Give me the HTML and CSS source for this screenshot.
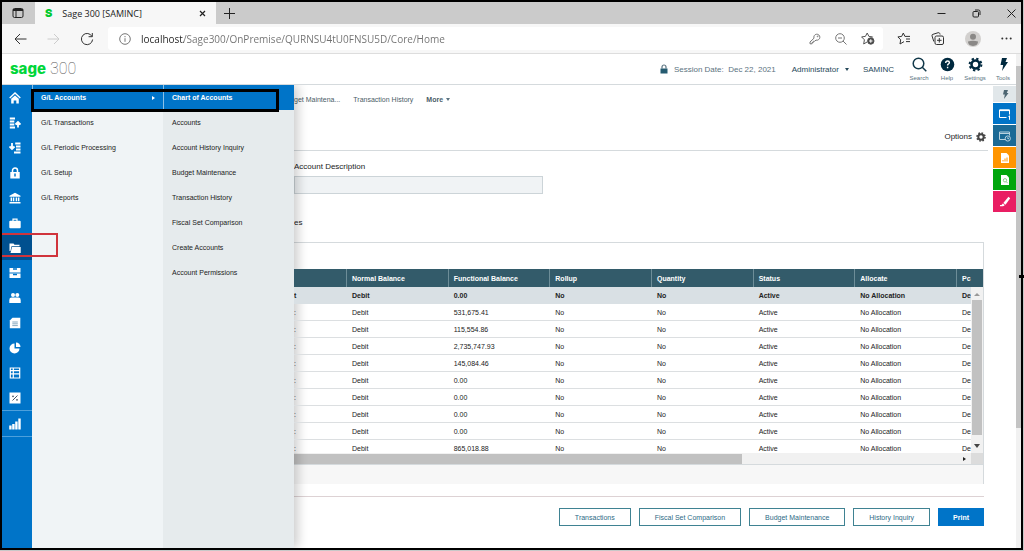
FILE: index.html
```html
<!DOCTYPE html>
<html lang="en">
  <head>
    <meta charset="UTF-8" />
    <meta name="viewport" content="width=device-width, initial-scale=1.0" />
    <title>Sage 300 [SAMINC]</title>
    <link rel="stylesheet" href="styles.css">
  </head>
  <body>
    <div class="window">
      <!-- Browser tabs -->
      <div class="tab-bar">
        <button class="tab-actions" aria-label="Tab actions">
          <svg width="12" height="12" viewBox="0 0 12 12" fill="none" stroke="#222"><rect x="1" y="1.5" width="10" height="9" rx="1.5" /><path d="M1 3h10" stroke-width="2" /><path d="M4 3v7" /></svg>
        </button>
        <div class="tab">
          <span class="favicon">S</span>
          <span class="tab-title">Sage 300 [SAMINC]</span>
          <button aria-label="Close tab"><svg width="7" height="7" viewBox="0 0 7 7" stroke="#222" stroke-width="1.2"><path d="M1 1l5 5M6 1l-5 5" /></svg></button>
        </div>
        <button class="new-tab" aria-label="New tab"><svg width="11" height="11" viewBox="0 0 11 11" stroke="#222"><path d="M5.5 0v11M0 5.5h11" /></svg></button>
        <div class="window-buttons">
          <button aria-label="Minimize"><svg width="9" height="9" viewBox="0 0 9 9" stroke="#222"><path d="M0.500 4.500h8" /></svg></button>
          <button aria-label="Restore"><svg width="9" height="9" viewBox="0 0 9 9" fill="none" stroke="#222"><rect x="1" y="2.500" width="5.500" height="5.500" rx="1" /><path d="M3 1h3.500a1.500 1.500 0 0 1 1.500 1.500v3.500" /></svg></button>
          <button aria-label="Close"><svg width="9" height="9" viewBox="0 0 9 9" stroke="#222"><path d="M0.500 0.500l8 8M8.500 0.500l-8 8" /></svg></button>
        </div>
      </div>

      <!-- Address bar -->
      <div class="toolbar">
        <button aria-label="Back"><svg width="13" height="12" viewBox="0 0 13 12" fill="none" stroke="#333"><path d="M12.500 6H1M6 1L1 6l5 5" /></svg></button>
        <button aria-label="Forward"><svg width="13" height="12" viewBox="0 0 13 12" fill="none" stroke="#ccc"><path d="M0.500 6H12M7 1l5 5-5 5" /></svg></button>
        <button aria-label="Refresh"><svg width="14" height="14" viewBox="0 0 14 14" fill="none" stroke="#333"><path d="M12 4.500A5.600 5.600 0 1 0 12.600 7.500M12.300 1v3.700H8.600" /></svg></button>
        <div class="address">
          <svg width="12" height="12" viewBox="0 0 12 12" fill="none" stroke="#777"><circle cx="6" cy="6" r="5.300" /><path d="M6 5.200v3.600M6 3v1.200" /></svg>
          <input type="text" aria-label="Address" value="localhost/Sage300/OnPremise/QURNSU4tU0FNSU5D/Core/Home" />
          <button aria-label="Passwords"><svg width="12" height="12" viewBox="0 0 12 12" fill="none" stroke="#777"><path d="M5 5.200a3 3 0 1 1 2 1.900L5.500 8.300H4.300v1.200H3.100v1.300H1V9z" /><circle cx="8.600" cy="3.400" r=".4" /></svg></button>
          <button aria-label="Zoom"><svg width="12" height="12" viewBox="0 0 12 12" fill="none" stroke="#777"><circle cx="5" cy="5" r="4.300" /><path d="M8 8l3.500 3.500M3 5h4" /></svg></button>
          <button aria-label="Add to favorites"><svg width="14" height="13" viewBox="0 0 14 13" fill="none" stroke="#555"><path d="M6 10L2.700 12l.7-4.200L.6 4.900l3.800-.5L6.200 1l1.700 3.400 3.700.5-.8.8" /><circle cx="9.800" cy="9" r="3.200" fill="#444" /><path d="M8 9h3.600M9.800 7.200v3.600" stroke="#fff" /></svg></button>
        </div>
        <div class="toolbar-end">
          <button aria-label="Favorites"><svg width="14" height="13" viewBox="0 0 14 13" fill="none" stroke="#333"><path d="M7 9.600L3 12l.7-4.200L.9 4.900l3.800-.5L6.300 1l1.600 3.400H13M9 7h4M9 9.600h4" /></svg></button>
          <button aria-label="Collections"><svg width="14" height="13" viewBox="0 0 14 13" fill="none" stroke="#333"><rect x="4" y="4" width="8.500" height="8.500" rx="1.500" /><path d="M8.300 6v4.600M6 8.300h4.600M2.800 9.500L1 3.800a1.300 1.300 0 0 1 1-1.500L7.200.7a1.300 1.300 0 0 1 1.600.9l.3.9" /></svg></button>
          <button aria-label="Profile"><svg width="16" height="16" viewBox="0 0 16 16"><circle cx="8" cy="8" r="8" fill="#d2d0ce" /><circle cx="8" cy="5.800" r="3" fill="#8a8886" /><path d="M3 10.500q5-1.500 10 0 0 4-5 4.500-5-.5-5-4.500z" fill="#8a8886" /></svg></button>
          <button aria-label="More options"><svg width="11" height="3" viewBox="0 0 11 3" fill="#333"><circle cx="1.300" cy="1.500" r="1" /><circle cx="5.500" cy="1.500" r="1" /><circle cx="9.700" cy="1.500" r="1" /></svg></button>
        </div>
      </div>

      <div class="viewport">
        <div class="app">
          <header class="app-header">
            <a class="logo" href="#"><b>sage</b> <span>300</span></a>
            <div class="session">
              <svg width="8" height="10" viewBox="0 0 8 10"><path d="M2 4.500V3a2 2 0 0 1 4 0v1.500" fill="none" stroke="#5b7380" stroke-width="1.200" /><rect x="0.500" y="4.500" width="7" height="5" fill="#255b70" /></svg>
              <span>Session Date:&nbsp; Dec 22, 2021</span>
            </div>
            <button class="user">Administrator <i class="caret"></i></button>
            <span class="company">SAMINC</span>
            <nav class="header-tools">
              <a href="#"><svg width="15" height="15" viewBox="0 0 15 15" fill="none" stroke="#12394a" stroke-width="1.500"><circle cx="6.500" cy="6.500" r="5.300" /><path d="M10.300 10.300l4 4" /></svg>Search</a>
              <a href="#"><svg width="15" height="15" viewBox="0 0 15 15"><circle cx="7.500" cy="7.500" r="6.800" fill="#00293f" /><path d="M5.700 6q0-2 1.900-2 1.800 0 1.800 1.600 0 1-1.100 1.500-.7.400-.7 1.400M7.600 9.800v1.500" fill="none" stroke="#fff" stroke-width="1.400" /></svg>Help</a>
              <a href="#"><svg width="15" height="15" viewBox="0 0 15 15" fill="none" stroke="#00293f"><circle cx="7.500" cy="7.500" r="4" stroke-width="2.600" /><circle cx="7.500" cy="7.500" r="5.900" stroke-width="2" stroke-dasharray="2.300 2.334" /></svg>Settings</a>
              <a href="#"><svg width="15" height="15" viewBox="0 0 15 15" fill="#00293f"><path d="M6 1h5L9.500 5H12L6 14l1.200-6H4.500z" /></svg>Tools</a>
            </nav>
          </header>

          <div class="app-body">
            <!-- Module icons -->
            <nav class="rail">
              <a href="#" aria-label="Home"><svg viewBox="0 0 12 12" fill="none" stroke="#fff" stroke-width="1.400"><path d="M.7 6L6 1l5.300 5" /><path d="M2.200 6.800L6 3.400l3.800 3.400V11.500H7.300V8.500H4.700v3H2.200z" fill="#fff" stroke="none" /></svg></a>
              <a href="#" aria-label="Accounts Payable"><svg viewBox="0 0 12 12" fill="none" stroke="#fff" stroke-width="1.800"><path d="M.8 1.500H6M.8 4.500h4.500M.8 7.500h4.500M.8 10.500H6M9 10.500V5.500M6.500 7.500L9 5l2.500 2.500" /></svg></a>
              <a href="#" aria-label="Accounts Receivable"><svg viewBox="0 0 12 12" fill="none" stroke="#fff" stroke-width="1.800"><path d="M6.200 1.500h5.300M7 4.500h4.500M7 7.500h4.500M5 10.500h6.500M3 1v5.500M.5 4.500L3 7l2.500-2.500" /></svg></a>
              <a href="#" aria-label="Administrative Services"><svg viewBox="0 0 12 12"><path d="M3.500 5V3.500a2.500 2.500 0 0 1 5 0V5" fill="none" stroke="#fff" stroke-width="1.500" /><rect x="1.300" y="5" width="9.400" height="6.500" fill="#fff" /><path d="M6 6.500v3" stroke="#0074c8" stroke-width="1.500" /></svg></a>
              <a href="#" aria-label="Bank"><svg viewBox="0 0 12 12" fill="#fff"><path d="M.5 3.800L6 .7l5.500 3.100v1H.5zM1.600 5.500h1.600v3.800H1.600zM4 5.500h1.300v3.800H4zM6.700 5.500H8v3.800H6.700zM8.800 5.500h1.600v3.800H8.800zM.5 10h11v1.500H.5z" /></svg></a>
              <a href="#" aria-label="Common Services"><svg viewBox="0 0 12 12"><path d="M4 4V2.200h4V4" fill="none" stroke="#fff" stroke-width="1.200" /><rect x=".3" y="3.800" width="11.400" height="7.400" rx="1" fill="#fff" /></svg></a>
              <a href="#" aria-label="General Ledger" class="active"><svg viewBox="0 0 12 12" fill="#fff"><path d="M.5 1.500h4l1 1.300h5v1.500H2.500L1.500 9H.5z" /><path d="M3 5h8.700V11H1.500z" /></svg></a>
              <a href="#" aria-label="Inventory Control"><svg viewBox="0 0 12 12"><path d="M.5 1h11v4.500H.5zM.5 6.500h11V11H.5z" fill="#fff" /><path d="M4 2h4M4 7.500h4" stroke="#0074c8" stroke-width="1.400" /></svg></a>
              <a href="#" aria-label="Payroll"><svg viewBox="0 0 12 12" fill="#fff"><circle cx="4" cy="3" r="2" /><circle cx="8.300" cy="3" r="2" /><path d="M.3 11V8q0-2.400 2.300-2.400h6.800q2.300 0 2.300 2.400v3z" /></svg></a>
              <a href="#" aria-label="Purchase Orders"><svg viewBox="0 0 12 12"><path d="M3.500.8H11.300V11.200H.8V3.500z" fill="#fff" /><path d="M3.300 5h5.500M3.300 6.800h5.500M3.300 8.600h5.500" stroke="#6a93ad" stroke-width=".8" /></svg></a>
              <a href="#" aria-label="Project and Job Costing"><svg viewBox="0 0 12 12" fill="#fff"><path d="M5.500 1.500v5h5a5 5 0 1 1-5-5z" /><path d="M7 .5a4.500 4.500 0 0 1 4.500 4.500H7z" /></svg></a>
              <a href="#" aria-label="Transaction Analysis"><svg viewBox="0 0 12 12" fill="none" stroke="#fff" stroke-width="1.200"><path d="M1.300 1h9.400v10H1.300zM1.300 3.700h9.400M1.300 6.800h9.400M4.300 1v10" /></svg></a>
              <a href="#" aria-label="Tax Services"><svg viewBox="0 0 12 12"><rect x=".5" y=".5" width="11" height="11" fill="#fff" /><path d="M8.500 3.500l-5 5" stroke="#456" /><circle cx="4" cy="4.300" r=".9" fill="#456" /><circle cx="8" cy="7.800" r=".9" fill="#456" /></svg></a>
              <a href="#" aria-label="Reports" class="reports"><svg viewBox="0 0 12 12" fill="#fff"><path d="M.2 7.500h2.400v4H.2zM3.200 6h2.400v5.500H3.200zM6.200 3.500h2.400v8H6.200zM9.300.5h2.400v11H9.300z" /></svg></a>
            </nav>

            <nav class="menu">
              <a href="#" class="active">G/L Accounts <i class="arrow"></i></a>
              <a href="#">G/L Transactions</a>
              <a href="#">G/L Periodic Processing</a>
              <a href="#">G/L Setup</a>
              <a href="#">G/L Reports</a>
            </nav>
            <nav class="menu submenu">
              <a href="#" class="active">Chart of Accounts</a>
              <a href="#">Accounts</a>
              <a href="#">Account History Inquiry</a>
              <a href="#">Budget Maintenance</a>
              <a href="#">Transaction History</a>
              <a href="#">Fiscal Set Comparison</a>
              <a href="#">Create Accounts</a>
              <a href="#">Account Permissions</a>
            </nav>

            <main class="content">
              <nav class="open-tasks">
                <a href="#">get Maintena...</a>
                <a href="#">Transaction History</a>
                <button>More <i class="caret"></i></button>
              </nav>

              <div class="options-row">
                <button>Options <svg width="10" height="10" viewBox="0 0 10 10" fill="none" stroke="#444"><circle cx="5" cy="5" r="2.700" stroke-width="2" /><circle cx="5" cy="5" r="4" stroke-width="1.600" stroke-dasharray="1.600 1.542" /></svg></button>
              </div>

              <div class="field">
                <label for="description">Account Description</label>
                <input type="text" id="description" readonly />
              </div>

              <h2>es</h2>

              <section class="grid">
                <div class="grid-view">
                  <table>
                    <colgroup>
                      <col class="col-first"><col><col><col><col><col><col><col class="col-last">
                    </colgroup>
                    <thead>
                      <tr><th></th><th>Normal Balance</th><th>Functional Balance</th><th>Rollup</th><th>Quantity</th><th>Status</th><th>Allocate</th><th>Pc</th></tr>
                    </thead>
                    <tbody>
                      <tr class="selected"><td>t</td><td>Debit</td><td>0.00</td><td>No</td><td>No</td><td>Active</td><td>No Allocation</td><td>De</td></tr>
                      <tr><td>:</td><td>Debit</td><td>531,675.41</td><td>No</td><td>No</td><td>Active</td><td>No Allocation</td><td>De</td></tr>
                      <tr><td>:</td><td>Debit</td><td>115,554.86</td><td>No</td><td>No</td><td>Active</td><td>No Allocation</td><td>De</td></tr>
                      <tr><td>:</td><td>Debit</td><td>2,735,747.93</td><td>No</td><td>No</td><td>Active</td><td>No Allocation</td><td>De</td></tr>
                      <tr><td>:</td><td>Debit</td><td>145,084.46</td><td>No</td><td>No</td><td>Active</td><td>No Allocation</td><td>De</td></tr>
                      <tr><td>:</td><td>Debit</td><td>0.00</td><td>No</td><td>No</td><td>Active</td><td>No Allocation</td><td>De</td></tr>
                      <tr><td>:</td><td>Debit</td><td>0.00</td><td>No</td><td>No</td><td>Active</td><td>No Allocation</td><td>De</td></tr>
                      <tr><td>:</td><td>Debit</td><td>0.00</td><td>No</td><td>No</td><td>Active</td><td>No Allocation</td><td>De</td></tr>
                      <tr><td>:</td><td>Debit</td><td>0.00</td><td>No</td><td>No</td><td>Active</td><td>No Allocation</td><td>De</td></tr>
                      <tr><td>:</td><td>Debit</td><td>865,018.88</td><td>No</td><td>No</td><td>Active</td><td>No Allocation</td><td>De</td></tr>
                    </tbody>
                  </table>
                  <div class="v-scroll"><i class="up"></i><div class="thumb"></div><i class="down"></i></div>
                </div>
                <div class="h-scroll"><div class="thumb"></div><i class="arrow"></i><div class="corner"></div></div>
                <div class="grid-footer"></div>
              </section>

              <div class="actions">
                <button>Transactions</button>
                <button>Fiscal Set Comparison</button>
                <button>Budget Maintenance</button>
                <button>History Inquiry</button>
                <button class="primary">Print</button>
              </div>
            </main>

            <aside class="widgets">
              <button class="bolt" aria-label="Tools"><svg viewBox="0 0 12 12" fill="#4d6672"><path d="M5 2h4L7.800 5h1.700L5 11l.8-4.500H4z" /></svg></button>
              <button class="blue" aria-label="Open windows"><svg viewBox="0 0 12 12" fill="none" stroke="#fff"><path d="M7.500 9.500h-7V2h10v4.500" /><path d="M.5 2.300h10" stroke-width="1.600" /><path d="M9.500 8.500l1-.7v4" /></svg></button>
              <button class="teal" aria-label="Recent windows"><svg viewBox="0 0 12 12" fill="none" stroke="#b8d2df"><path d="M6 9.500H.5V2h10v3.500M.5 3.500h10" /><circle cx="8.800" cy="8.500" r="2.600" /><path d="M8.800 7.200v1.500h1.200" /></svg></button>
              <button class="orange" aria-label="Report list"><svg viewBox="0 0 12 12"><path d="M2 1h5.500L10 3.500V11H2z" fill="#fff" /><path d="M4 9.500V8M6 9.500v-3M8 9.500v-4" stroke="#ff9500" /></svg></button>
              <button class="green" aria-label="Inquiry list"><svg viewBox="0 0 12 12"><path d="M2 1h5.500L10 3.500V11H2z" fill="#fff" /><circle cx="6" cy="6.300" r="1.700" fill="none" stroke="#8bcf8b" /><path d="M7.300 7.600l1.300 1.600" stroke="#8bcf8b" /></svg></button>
              <button class="pink" aria-label="Notes"><svg viewBox="0 0 12 12" fill="#fff"><path d="M9.500.8l1.700 1.400L6.500 8.700 4.300 7z" /><path d="M3.800 7.500l2 1.600q-1 1.400-2.500 1.200H1v-1.200h1.500z" /></svg></button>
            </aside>

            <div class="mark-black"></div>
            <div class="mark-red"></div>
          </div>
        </div>
        <div class="page-scroll"><div class="thumb"></div></div>
      </div>
      <i class="handle handle-right"></i>
      <i class="handle handle-bottom"></i>
    </div>
  </body>
</html>
```
FILE: styles.css
```css
* {
  box-sizing: border-box;
}
body {
  margin: 0;
  background: #c8c8c8;
  font-family: "Liberation Sans", Arial, sans-serif;
  font-size: 7px;
  color: #222;
}
button {
  display: flex;
  align-items: center;
  padding: 0;
  border: none;
  background: none;
  font: inherit;
  color: inherit;
  cursor: pointer;
}
a {
  color: inherit;
  text-decoration: none;
}
svg {
  display: block;
  flex: none;
}

.window {
  position: relative;
  display: flex;
  flex-direction: column;
  min-height: calc(100vh - 1px);
  margin-right: 1px;
  border: 2px solid #000;
}

/* Browser tabs */
.tab-bar {
  display: flex;
  align-items: center;
  height: 22px;
  background: #cbcbcb;
}
.tab-actions {
  width: 33px;
  padding-left: 10px;
}
.tab {
  display: flex;
  align-items: center;
  gap: 10px;
  width: 181px;
  height: 100%;
  padding: 0 10px;
  background: #f7f7f7;
  font-family: "Open Sans", sans-serif;
  font-size: 9px;
}
.tab-title {
  flex: 1;
}
.favicon {
  font-family: Inter, sans-serif;
  font-weight: 900;
  font-size: 11px;
  color: #00c92c;
}
.new-tab {
  margin-left: 8px;
}
.window-buttons {
  display: flex;
  gap: 26px;
  margin-left: auto;
  padding-right: 5px;
}

/* Address bar */
.toolbar {
  display: flex;
  align-items: center;
  height: 30px;
  padding-left: 12px;
  background: #f7f7f7;
  border-bottom: 1px solid #ddd;
}
.toolbar > button {
  margin-right: 20px;
}
.address {
  display: flex;
  flex: 1;
  align-items: center;
  gap: 14px;
  height: 23px;
  margin: 0 14px 0 -6px;
  padding: 0 8px 0 11px;
  border-radius: 3px;
  background: #fff;
}
.address input {
  flex: 1;
  min-width: 0;
  margin-left: -4px;
  padding: 0;
  border: none;
  font-family: "Open Sans", sans-serif;
  font-size: 10px;
  color: transparent;
  background: linear-gradient(90deg, #222 43px, #707070 43px);
  background-clip: text;
}
.toolbar-end {
  display: flex;
  align-items: center;
  gap: 20px;
  padding-right: 9px;
}

.viewport {
  display: flex;
  flex: 1;
}
.app {
  display: flex;
  flex: 1;
  flex-direction: column;
  min-width: 0;
  background: #fff;
}
.page-scroll {
  width: 5px;
  padding-top: 12px;
  background: #f1f1f1;
}
.page-scroll .thumb {
  height: 75%;
  background: #c4c4c4;
}

/* Application header */
.app-header {
  display: flex;
  align-items: center;
  height: 31px;
  padding-left: 8px;
  border-bottom: 1px solid #d5dadd;
  font-size: 8px;
  color: #27495a;
}
.logo {
  display: flex;
  align-items: baseline;
  gap: 4px;
  margin-right: auto;
  font-family: Roboto, sans-serif;
  font-size: 16px;
  line-height: 26px;
}
.logo b {
  font-family: Inter, sans-serif;
  font-size: 15px;
  font-weight: 800;
  color: #00d639;
}
.logo span {
  font-weight: 100;
  color: #555;
}
.session {
  display: flex;
  align-items: center;
  gap: 6px;
  color: #5b7380;
}
.caret {
  margin-left: 6px;
  border: 2px solid transparent;
  border-top: 3px solid #27495a;
  border-bottom: none;
}
.user {
  margin-left: 16px;
}
.company {
  margin: 0 12px 0 14px;
}
.header-tools {
  display: flex;
  gap: 2px;
}
.header-tools a {
  display: flex;
  flex-direction: column;
  align-items: center;
  gap: 3px;
  width: 26px;
  font-size: 6px;
  line-height: 7px;
  color: #5b7380;
}

/* Module rail and fly-out menus */
.app-body {
  position: relative;
  display: flex;
  flex: 1;
}
.rail {
  width: 30px;
  background: #0074c8;
}
.rail a {
  display: flex;
  align-items: center;
  height: 25px;
  padding-left: 7px;
}
.rail svg {
  width: 12px;
  height: 12px;
}
.rail .active {
  background: #00508f;
}
.rail .reports {
  height: 27px;
  border-top: 1px solid #4da0dc;
  border-bottom: 1px solid #4da0dc;
}
.menu {
  width: 131px;
  background: #f0f4f6;
}
.menu a {
  display: flex;
  align-items: center;
  justify-content: space-between;
  height: 25px;
  padding: 0 8px 0 9px;
}
.menu .active {
  background: #0074c8;
  border-left: 1px solid #8cc0e6;
  padding-left: 8px;
  font-weight: bold;
  color: #fff;
}
.arrow {
  border: 2px solid transparent;
  border-left: 3px solid;
  border-right: none;
}
.submenu {
  position: relative;
  background: #e6ebed;
  box-shadow: 4px 0 10px rgba(0, 0, 0, 0.2);
  clip-path: inset(0 -20px 0 0);
}

/* Page content */
.content {
  flex: 1;
  min-width: 0;
  padding-right: 5px;
}
.open-tasks {
  display: flex;
  align-items: center;
  gap: 13px;
  height: 28px;
  color: #4a5c66;
}
.open-tasks button {
  font-weight: bold;
}
.open-tasks .caret {
  margin-left: 3px;
  border-top-color: #5b7380;
}
.options-row {
  display: flex;
  justify-content: flex-end;
  height: 38px;
  padding: 10px 2px 0 0;
  border-bottom: 1px solid #d5dadd;
  font-size: 8px;
}
.options-row button {
  gap: 4px;
}
.field {
  display: flex;
  flex-direction: column;
  gap: 4px;
  width: 249px;
  padding-top: 11px;
  font-size: 8px;
  line-height: 10px;
}
.field input {
  height: 18px;
  border: 1px solid #ccd4d8;
  background: #f0f3f5;
}
h2 {
  margin: 24px 0 14px;
  font-size: 8px;
  font-weight: normal;
  line-height: 10px;
}

/* Account grid */
.grid {
  margin-right: 4px;
  padding-top: 26px;
  border: 1px solid #d5dadd;
  border-width: 1px 1px 0 0;
}
.grid-view {
  position: relative;
  height: 184px;
  overflow: hidden;
}
table {
  width: 100%;
  table-layout: fixed;
  border-collapse: separate;
  border-spacing: 0;
}
col {
  width: 15%;
}
.col-first {
  width: 52px;
}
.col-last {
  width: 27px;
}
th,
td {
  height: 17px;
  padding: 0 0 0 6px;
  border-bottom: 1px solid #dcdfe1;
  overflow: hidden;
  text-align: left;
  white-space: nowrap;
}
th {
  height: 18px;
  padding-left: 5px;
  border-bottom: none;
  border-left: 1px solid #6d8d98;
  background: #335b6a;
  color: #fff;
}
th:first-child {
  border-left: none;
}
td:first-child {
  padding-left: 0;
}
.selected td {
  background: #d9e0e4;
  border-color: #d9e0e4;
  font-weight: bold;
}
.v-scroll {
  position: absolute;
  top: 18px;
  right: 0;
  bottom: 0;
  display: flex;
  flex-direction: column;
  align-items: center;
  justify-content: space-between;
  width: 12px;
  padding: 6px 0 5px;
  background: #f1f1f1;
}
.v-scroll .thumb {
  flex: 1;
  width: 10px;
  margin: 4px 0 9px;
  background: #c1c1c1;
}
.up,
.down {
  border: 3px solid transparent;
}
.up {
  border-bottom: 3px solid #999;
  border-top: none;
}
.down {
  border-top: 4px solid #444;
  border-bottom: none;
}
.h-scroll {
  display: flex;
  align-items: center;
  height: 12px;
  background: #f1f1f1;
  border-bottom: 1px solid #d5dadd;
}
.h-scroll .thumb {
  width: 65%;
  height: 10px;
  background: #c1c1c1;
}
.h-scroll .arrow {
  margin-left: auto;
}
.corner {
  width: 12px;
  height: 100%;
  margin-left: 5px;
  background: #dcdcdc;
}
.grid-footer {
  height: 19px;
  background: #f7f7f7;
}
.actions {
  display: flex;
  justify-content: flex-end;
  gap: 8px;
  margin: 12px 4px 22px 0;
  padding-top: 11px;
  border-top: 1px solid #ddd2d4;
}
.actions button {
  height: 18px;
  padding: 0 15px;
  border: 1px solid #3f8292;
  color: #2e6a86;
}
.actions .primary {
  padding: 0 14px;
  border-color: #0074c8;
  background: #0074c8;
  font-weight: bold;
  color: #fff;
}

/* Widget buttons on the right edge */
.widgets {
  display: flex;
  flex-direction: column;
  gap: 1px;
  width: 23px;
  padding-top: 1px;
}
.widgets button {
  justify-content: center;
  height: 21px;
}
.widgets svg {
  width: 12px;
  height: 12px;
}
.widgets .bolt {
  height: 16px;
  background: #e1e7ea;
}
.blue {
  background: #0074c8;
}
.teal {
  background: #1b6a96;
}
.orange {
  background: #ff9500;
}
.green {
  background: #00a60c;
}
.pink {
  background: #e91e63;
}

/* Highlight frames drawn over the menus */
.mark-black,
.mark-red {
  position: absolute;
}
.mark-black {
  top: 4px;
  left: 29px;
  width: 248px;
  height: 23px;
  border: 3px solid #000;
}
.mark-red {
  top: 148px;
  left: 0;
  width: 56px;
  height: 24px;
  border: 2px solid #d0343c;
  border-left: none;
}
.handle {
  position: absolute;
  width: 5px;
  height: 3px;
  background: #000;
}
.handle-right {
  top: 50%;
  right: -3px;
}
.handle-bottom {
  bottom: -3px;
  left: 51%;
}
```
